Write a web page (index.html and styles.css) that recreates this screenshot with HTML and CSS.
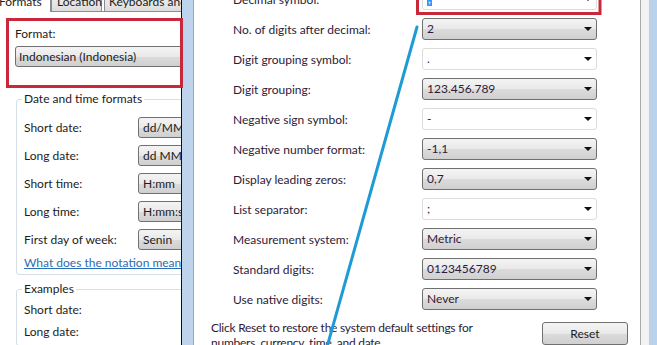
FILE: index.html
```html
<!DOCTYPE html>
<html lang="en">
<head>
    <meta charset="utf-8">
    <title>Region and Language - Customize Format</title>
    <link rel="stylesheet" href="styles.css">
</head>
<body>
<div class="screen">
    <div class="regional">
        <div class="tabs">
            <div class="tab tab-active">Formats</div>
            <div class="tab tab-location">Location</div>
            <div class="tab tab-keyboards">Keyboards and Languages</div>
        </div>
        <div class="page">
            <div class="field-label">Format:</div>
            <div class="combo combo-wide">Indonesian (Indonesia)</div>
            <fieldset class="group">
                <legend>Date and time formats</legend>
                <div class="row"><span class="row-label">Short date:</span><div class="combo">dd/MM/yyyy</div></div>
                <div class="row"><span class="row-label">Long date:</span><div class="combo">dd MMMM yyyy</div></div>
                <div class="row"><span class="row-label">Short time:</span><div class="combo">H:mm</div></div>
                <div class="row"><span class="row-label">Long time:</span><div class="combo">H:mm:ss</div></div>
                <div class="row"><span class="row-label">First day of week:</span><div class="combo">Senin</div></div>
                <a class="notation">What does the notation mean?</a>
            </fieldset>
            <fieldset class="group examples">
                <legend>Examples</legend>
                <div class="row"><span class="row-label">Short date:</span></div>
                <div class="row"><span class="row-label">Long date:</span></div>
            </fieldset>
        </div>
    </div>
    <div class="frame-left"></div>
    <div class="dialog">
        <div class="settings">
            <div class="setting"><span class="setting-label">Decimal symbol:</span><div class="combo combo-edit"><span class="selected">,</span></div></div>
            <div class="setting"><span class="setting-label">No. of digits after decimal:</span><div class="combo">2</div></div>
            <div class="setting"><span class="setting-label">Digit grouping symbol:</span><div class="combo combo-edit">.</div></div>
            <div class="setting"><span class="setting-label">Digit grouping:</span><div class="combo">123.456.789</div></div>
            <div class="setting"><span class="setting-label">Negative sign symbol:</span><div class="combo combo-edit">-</div></div>
            <div class="setting"><span class="setting-label">Negative number format:</span><div class="combo">-1,1</div></div>
            <div class="setting"><span class="setting-label">Display leading zeros:</span><div class="combo">0,7</div></div>
            <div class="setting"><span class="setting-label">List separator:</span><div class="combo combo-edit">;</div></div>
            <div class="setting"><span class="setting-label">Measurement system:</span><div class="combo">Metric</div></div>
            <div class="setting"><span class="setting-label">Standard digits:</span><div class="combo">0123456789</div></div>
            <div class="setting"><span class="setting-label">Use native digits:</span><div class="combo">Never</div></div>
        </div>
        <div class="footer">
            <p>Click Reset to restore the system default settings for numbers, currency, time, and date.</p>
            <button class="reset">Reset</button>
        </div>
    </div>
    <div class="frame-right"></div>
    <svg class="annotations" width="657" height="345" viewBox="0 0 657 345">
        <rect x="7.5" y="19.5" width="174" height="67" fill="none" stroke="#c9283a" stroke-width="3"/>
        <rect x="417.5" y="-10" width="182.5" height="23.5" fill="none" stroke="#c9283a" stroke-width="3"/>
        <line x1="417" y1="27" x2="327" y2="347" stroke="#1e9bd7" stroke-width="3" stroke-linecap="round"/>
    </svg>
</div>
</body>
</html>
```

FILE: styles.css
```css
body {
    margin: 0;
    font-family: Lato, "Liberation Sans", sans-serif;
    font-size: 12px;
}
.screen {
    position: relative;
    display: flex;
    width: 657px;
    height: 345px;
    overflow: hidden;
    background: #fff;
}

/* left window: Region and Language */
.regional {
    width: 182px;
    flex: none;
    box-sizing: border-box;
    border-right: 1px solid #101010;
    overflow: hidden;
    color: #1c1c1c;
}
.tabs {
    display: flex;
    height: 19px;
    margin-top: -8px;
    border-bottom: 1px solid #898c95;
}
.tab {
    flex: none;
    height: 19px;
    box-sizing: border-box;
    padding: 1px 0 0 4px;
    line-height: 16px;
    border: 1px solid #898c95;
    border-bottom: none;
    background: linear-gradient(#f5f5f5, #dcdcdc);
    white-space: nowrap;
}
.tab-active {
    width: 51px;
    height: 20px;
    margin-bottom: -1px;
    padding-left: 0;
    text-indent: -1px;
    border-left: none;
    background: #fff;
}
.tab-location {
    width: 51px;
    padding-left: 5px;
}
.tab-keyboards {
    margin-left: 2px;
}
.page {
    padding-left: 15px;
}
.field-label {
    margin-top: 14px;
    line-height: 16px;
}
.combo {
    position: relative;
    height: 21px;
    box-sizing: border-box;
    padding-left: 4px;
    line-height: 19px;
    border: 1px solid #707070;
    border-radius: 3px;
    background: linear-gradient(#f4f4f4, #e9e9e9 50%, #dbdbdb 52%, #d0d0d0);
    white-space: nowrap;
    overflow: hidden;
}
.combo::after {
    content: "";
    position: absolute;
    right: 4px;
    top: 50%;
    margin-top: -2px;
    border-left: 4px solid transparent;
    border-right: 4px solid transparent;
    border-top: 4px solid #111;
}
.combo-wide {
    width: 180px;
    margin-top: 4px;
    padding-left: 3px;
}
.group {
    min-width: 0;
    margin: 24px -10px 0 1px;
    padding: 6px 0 3px 7px;
    border: 1px solid #d5dfe5;
    border-radius: 3px;
}
.group legend {
    padding: 0 2px;
    margin-left: -2px;
    line-height: 16px;
}
.row {
    display: flex;
    align-items: center;
    height: 28px;
}
.row-label {
    flex: none;
    width: 114px;
    white-space: nowrap;
}
.group .combo {
    flex: none;
    width: 60px;
}
.notation {
    display: block;
    margin-top: 2px;
    line-height: 16px;
    color: #2a6db5;
    text-decoration: underline;
    white-space: nowrap;
}
.examples {
    margin-top: 6px;
    padding-top: 1px;
}
.examples .row {
    height: 22px;
}

/* window frames */
.frame-left {
    width: 12px;
    flex: none;
    box-sizing: border-box;
    background: #bdd4ec;
    border-right: 1px solid #9aa6b4;
}
.frame-right {
    flex: 1;
    background: #bad2ec;
    border-left: 8px solid #f3f3f3;
}

/* right window: Customize Format */
.dialog {
    width: 447px;
    flex: none;
    box-sizing: border-box;
    border-right: 1px solid #a9a9a9;
    background: #fff;
    color: #2e1a38;
}
.settings {
    margin-top: -16px;
    padding-left: 39px;
}
.setting {
    display: flex;
    align-items: center;
    height: 30px;
}
.setting-label {
    flex: none;
    width: 189px;
    white-space: nowrap;
}
.setting .combo {
    width: 175px;
    height: 22px;
    line-height: 20px;
}
.combo-edit {
    background: #fff;
    border-color: #dcdcdc;
}
.selected {
    background: #3399ff;
    color: #fff;
    padding: 0 1px;
}
.footer {
    display: flex;
    justify-content: space-between;
    align-items: flex-start;
    padding: 6px 12px 0 17px;
}
.footer p {
    margin: 0;
    width: 290px;
    line-height: 15px;
    letter-spacing: -0.25px;
}
.reset {
    width: 86px;
    height: 23px;
    margin-top: 2px;
    font: inherit;
    color: #1c1c1c;
    border: 1px solid #707070;
    border-radius: 3px;
    background: linear-gradient(#f4f4f4, #e9e9e9 50%, #dbdbdb 52%, #d0d0d0);
}

.annotations {
    position: absolute;
    top: 0;
    left: 0;
    pointer-events: none;
}
```
